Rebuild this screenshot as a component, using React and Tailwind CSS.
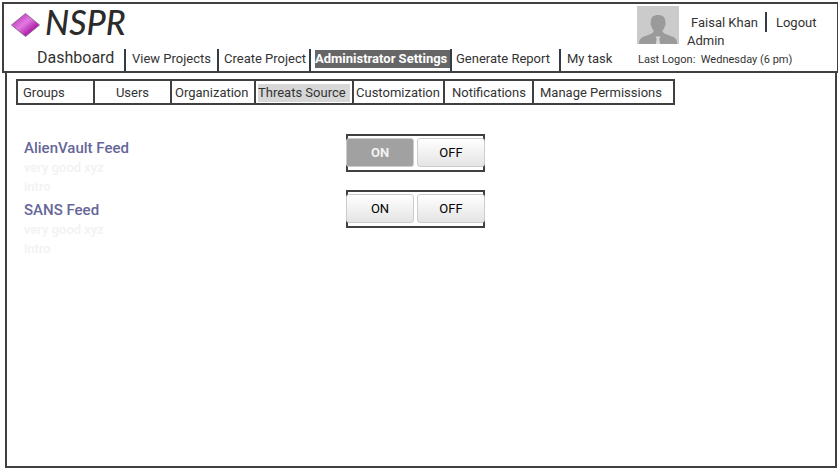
import React from "react";

const navLinks = [
  { label: "Dashboard", box: "w-[122px] pl-[33px] pb-[4px] text-base" },
  { label: "View Projects", box: "w-[93px] pl-[6px] pb-[2px]" },
  { label: "Create Project", box: "w-[92px] pl-[5px] pb-[2px]" },
  { label: "Administrator Settings", box: "w-[141px] pl-[4px]", active: true },
  { label: "Generate Report", box: "w-[109px] pl-[4px] pb-[2px]" },
  { label: "My task", box: "w-[70px] pl-[6px] pb-[2px]", last: true },
];

const tabs = [
  { label: "Groups", box: "w-[77px] pl-[5px]" },
  { label: "Users", box: "w-[77px] justify-center" },
  { label: "Organization", box: "w-[84px] pl-[3px]" },
  { label: "Threats Source", box: "w-[98px] px-[2px]", active: true },
  { label: "Customization", box: "w-[91px] pl-[2px]" },
  { label: "Notifications", box: "w-[89px] pl-[7px]" },
  { label: "Manage Permissions", box: "w-[139px] pl-[6px]", last: true },
];

const feeds = [
  { name: "AlienVault Feed", on: true },
  { name: "SANS Feed", on: false },
];

function Logo() {
  return (
    <a href="#home" className="flex h-[42px] items-center gap-[4px] pl-[6px]">
      <svg width="31" height="26" viewBox="0 0 31 26" aria-hidden="true">
        <defs>
          <linearGradient id="gem" x1="0" y1="0" x2="1" y2="1">
            <stop offset="0.25" stopColor="#c850c8" />
            <stop offset="0.45" stopColor="#e27ae2" />
            <stop offset="0.78" stopColor="#a8109f" />
          </linearGradient>
        </defs>
        <path d="M15.500 1.500 29.500 13 15.500 24.500 1.500 13Z" fill="url(#gem)" stroke="#8f6a94" strokeWidth="1" />
      </svg>
      <span className="pb-[6px] font-['Lato',cursive] text-[34px] leading-[36px] font-medium text-[#2b2b2b] italic">NSPR</span>
    </a>
  );
}

function Avatar() {
  return (
    <svg width="42" height="38" viewBox="0 0 42 38" className="shrink-0" role="img" aria-label="Faisal Khan">
      <rect width="42" height="38" fill="#cbcbcb" />
      <path
        d="M2 38c0-4 1.500-6 5-7.500 5-2 8-2.500 9.500-4.500v-2c-1.300-1-1.800-2.200-2-3.700-1-.5-1.300-3-.6-4-.6-4.800 2.600-7.300 7.200-7.300s7.700 2.500 7.200 7.300c.7 1 .4 3.500-.6 4-.2 1.500-.7 2.700-2 3.700v2c1.500 2 4.500 2.500 9.500 4.500 3.500 1.500 5 3.500 5 7.500z"
        fill="#9a9a9a"
      />
      <path d="M18.500 30.500h5l-1.200 2.500 1 5h-4.600l1-5z" fill="#d6d6d6" />
    </svg>
  );
}

function Header() {
  return (
    <header className="mt-[2px] ml-[2px] flex h-[71px] justify-between border-2 border-r border-[#404040]">
      <div>
        <Logo />
        <nav className="flex h-[25px] text-[13px]">
          {navLinks.map((l) => (
            <div
              key={l.label}
              className={`${l.box} flex h-[22px] shrink-0 items-center self-end whitespace-nowrap ${l.last ? "" : "border-r-2 border-[#333b44]"}`}
            >
              <a
                href="#"
                className={l.active ? "mb-[2px] flex-1 bg-[#666666] leading-[18px] font-bold text-white" : ""}
              >
                {l.label}
              </a>
            </div>
          ))}
        </nav>
      </div>
      <div className="w-[200px] shrink-0 pt-[2px]">
        <div className="flex h-[44px]">
          <Avatar />
          <div className="pt-[6px] pl-[8px] text-[13px] leading-[18px]">
            <div className="flex h-[20px] items-center">
              <span className="pt-px pl-[4px]">Faisal Khan</span>
              <span className="ml-[7px] h-[20px] w-[2px] bg-[#333b44]" />
              <a href="#logout" className="pt-px pl-[9px]">Logout</a>
            </div>
            <div>Admin</div>
          </div>
        </div>
        <p className="pl-px text-[11px] leading-[20px] whitespace-pre">Last Logon:  Wednesday (6 pm)</p>
      </div>
    </header>
  );
}

function ToggleButton({ label, active }) {
  return (
    <button
      type="button"
      aria-pressed={active}
      className={
        active
          ? "h-[29px] w-[68px] rounded-[3px] border border-[#cccccc] bg-[#a1a1a1] font-bold text-[#f2f2f2]"
          : "h-[29px] w-[68px] rounded-[3px] border border-[#cccccc] bg-linear-to-b from-white to-[#e4e4e4]"
      }
    >
      {label}
    </button>
  );
}

function Feeds() {
  return (
    <div className="flex pt-[29px] pl-[8px]">
      <div className="flex w-[322px] flex-col gap-[4px] pt-[4px] leading-[19px]">
        {feeds.map((f) => (
          <section key={f.name}>
            <h2 className="text-[15px] leading-[20px] font-medium text-[#666699]">{f.name}</h2>
            <p className="text-[13px] font-medium text-[#f2f2f2]">
              very good xyz
              <br />
              intro
            </p>
          </section>
        ))}
      </div>
      <div className="flex flex-col gap-[18px]">
        {feeds.map((f) => (
          <div
            key={f.name}
            role="group"
            aria-label={f.name}
            className="flex h-[38px] w-[139px] border-2 border-[#404040] pt-[2px] text-[13px] text-black"
          >
            <div className="-mx-[2px] flex shrink-0 gap-[3px]">
              <ToggleButton label="ON" active={f.on} />
              <ToggleButton label="OFF" active={false} />
            </div>
          </div>
        ))}
      </div>
    </div>
  );
}

export default function App() {
  return (
    <div className="flex min-h-screen flex-col overflow-hidden bg-white pb-[2px] font-['Roboto',sans-serif] text-[#333333]">
      <Header />
      <main className="mr-px ml-[5px] flex-1 border-2 border-t-0 border-[#404040] px-[9px] pt-[6px]">
        <nav className="flex h-[26px] w-fit border-2 border-[#404040] text-[13px]">
          {tabs.map((t) => (
            <div
              key={t.label}
              className={`${t.box} flex shrink-0 items-center pt-px whitespace-nowrap ${t.last ? "" : "border-r-2 border-[#404040]"}`}
            >
              <a href="#" className={t.active ? "flex-1 bg-[#d7d7d7] leading-[18px]" : ""}>{t.label}</a>
            </div>
          ))}
        </nav>
        <Feeds />
      </main>
    </div>
  );
}
